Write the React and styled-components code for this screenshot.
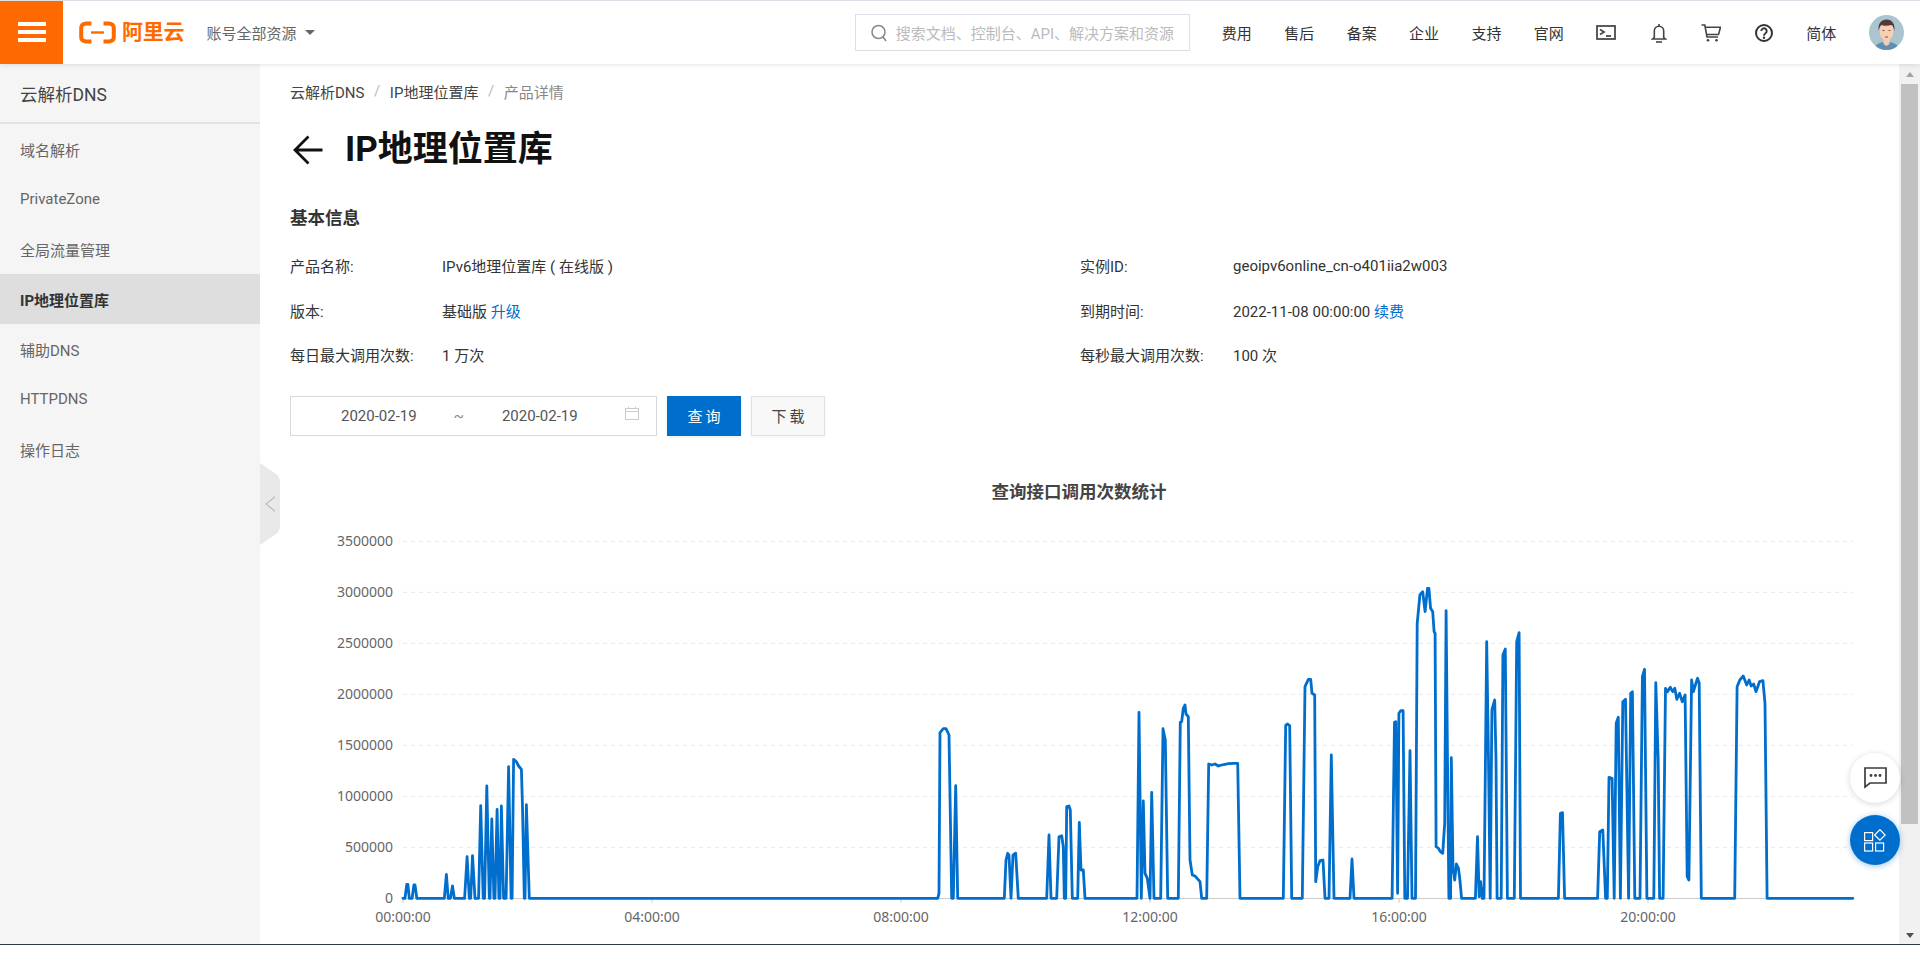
import React from "react";
import styled, { createGlobalStyle } from "styled-components";

const FONT = `Roboto, "Noto Sans CJK SC", sans-serif`;
const CHART_FONT = `"Noto Sans", "Noto Sans CJK SC", sans-serif`;

const Global = createGlobalStyle`
  html, body { margin: 0; padding: 0; height: 100%; overflow: hidden; background: #fff; }
  body { font-family: ${FONT}; color: #333; }
  * { box-sizing: border-box; }
`;

const Page = styled.div`
  position: relative; width: 1920px; height: 953px; display: flex; flex-direction: column; background: #fff; overflow: hidden;
`;
const TopBar = styled.header`
  height: 64px; flex: none; display: flex; align-items: center; background: #fff; border-top: 1px solid #dcdfe6;
  padding-right: 16px; position: relative; z-index: 3; box-shadow: 0 1px 5px rgba(0,0,0,.1);
`;
const Burger = styled.button`
  width: 63px; height: 63px; flex: none; border: 0; padding: 21px 17px 22px 18px; background: #ff6a00;
  display: flex; flex-direction: column; justify-content: space-between;
  span { display: block; height: 3.6px; background: #fff; }
`;
const Logo = styled.div`
  display: flex; align-items: center; margin-left: 16px; gap: 6px; color: #ff6a00;
  font-size: 21px; font-weight: 700; line-height: 1; letter-spacing: -.2px; white-space: nowrap;
`;
const Account = styled.div`
  margin-left: 22px; display: flex; align-items: center; gap: 9px; font-size: 15px; color: #666; white-space: nowrap;
  i { width: 0; height: 0; border-left: 5px solid transparent; border-right: 5px solid transparent; border-top: 5.5px solid #666; }
`;
const SearchBox = styled.div`
  margin-left: auto; width: 335px; height: 37px; border: 1px solid #dcdfe4; display: flex; align-items: center;
  padding-left: 15px; gap: 9px; font-size: 15px; color: #bbb; white-space: nowrap; overflow: hidden;
`;
const NavText = styled.a`
  width: 62.4px; flex: none; text-align: center; font-size: 15px; color: #333; white-space: nowrap;
  &:first-of-type { margin-left: 16px; }
`;
const LangText = styled.a`
  width: 62.4px; flex: none; text-align: center; font-size: 15px; color: #333; white-space: nowrap;
`;
const NavIcon = styled.span`
  width: 52.5px; flex: none; display: flex; justify-content: center; align-items: center; color: #444;
`;
const Avatar = styled.span`
  width: 35px; height: 35px; margin-left: 16.6px; flex: none; border-radius: 50%; overflow: hidden; display: block;
`;
const Body = styled.div`
  height: 881px; flex: none; display: flex; border-bottom: 1px solid #2d3a45;
`;
const Sidebar = styled.aside`
  width: 260px; flex: none; background: #f5f5f5; position: relative; z-index: 1;
`;
const SideHead = styled.div`
  height: 60px; display: flex; align-items: center; padding-left: 20px; font-size: 17.5px; color: #444; border-bottom: 2px solid #e2e2e2;
`;
const SideItem = styled.div`
  height: 50px; display: flex; align-items: center; padding-left: 20px; font-size: 15px;
  color: ${p => (p.$active ? "#333" : "#666")};
  font-weight: ${p => (p.$active ? 700 : 400)};
  background: ${p => (p.$active ? "#dedede" : "transparent")};
`;
const Collapse = styled.div`
  position: absolute; left: 100%; top: 399px; width: 20px; height: 82px; background: #e9e9e9;
  clip-path: polygon(0 0, 90% 15%, 100% 21%, 100% 79%, 90% 85%, 0 100%);
  display: flex; align-items: center; justify-content: flex-start; padding-left: 5px;
`;
const Main = styled.main`
  flex: 1; min-width: 0; padding: 16px 31px 0 30px; overflow: hidden; background: #fff;
`;
const Crumbs = styled.nav`
  height: 22px; display: flex; align-items: center; font-size: 15px; color: #444; white-space: nowrap;
  em { font-style: normal; color: #bbb; margin: 0 9.6px; }
  b { font-weight: 400; color: #888; }
`;
const TitleRow = styled.div`
  margin-top: 23px; height: 50px; display: flex; align-items: center; gap: 22px; padding-left: 3px;
`;
const Title = styled.h1`
  margin: 0; font-size: 35px; font-weight: 700; line-height: 50px; color: #111; white-space: nowrap;
`;
const Section = styled.h2`
  margin: 31px 0 0; font-size: 17.5px; line-height: 24px; font-weight: 700; color: #333;
`;
const InfoGrid = styled.div`
  margin-top: 13.5px; display: grid; grid-template-columns: 790px 1fr; grid-auto-rows: 44.4px;
`;
const InfoRow = styled.div`
  display: grid; grid-template-columns: ${p => (p.$right ? "153px" : "152px")} 1fr; align-items: center; font-size: 15px; color: #333; white-space: nowrap;
  a { color: #006ecc; }
`;
const Toolbar = styled.div`
  margin-top: 19.3px; height: 40px; display: flex; gap: 10px;
`;
const DateRange = styled.div`
  width: 367px; height: 40px; border: 1px solid #d8d8d8; display: flex; align-items: center; font-size: 15px; color: #555; position: relative; padding-left: 50px;
  span.tilde { color: #888; margin: 0 38px 0 37px; }
  svg { margin-left: 47px; margin-top: -5px; }
`;
const QueryBtn = styled.button`
  width: 74px; height: 40px; border: 0; background: #006ecc; color: #fff; font: 15px ${FONT}; letter-spacing: 3px; padding: 0 0 0 3px;
  box-shadow: 0 2px 3px rgba(0,0,0,.06);
`;
const DownBtn = styled.button`
  width: 74px; height: 40px; border: 1px solid #e0e0e0; background: #f8f8f8; color: #444; font: 15px ${FONT}; letter-spacing: 3px; padding: 0 0 0 3px;
  box-shadow: 0 2px 3px rgba(0,0,0,.04);
`;
const ChartBlock = styled.section`
  margin-top: 36px;
`;
const ChartTitle = styled.div`
  height: 38px; line-height: 40px; text-align: center; font-size: 17.5px; font-weight: 700; color: #444;
`;
const ChartSvg = styled.svg`
  display: block; width: 1578px; height: 434px; font-family: ${CHART_FONT}; font-size: 14px;
  text { fill: #666; }
`;
const Scrollbar = styled.div`
  width: 21px; flex: none; background: #f1f1f1; display: flex; flex-direction: column; align-items: center; position: relative; z-index: 1;
`;
const ScrollArrow = styled.div`
  width: 0; height: 0; flex: none; border-left: 4.5px solid transparent; border-right: 4.5px solid transparent;
  ${p => (p.$down ? "border-top: 5px solid #505050; margin: 0 0 6px;" : "border-bottom: 5px solid #a3a3a3; margin: 8px 0 7px;")}
`;
const ScrollThumb = styled.div`
  width: 17px; height: 740px; flex: none; background: #c1c1c1;
`;
const ScrollFill = styled.div`flex: 1;`;
const FabStack = styled.div`
  position: absolute; right: 20px; bottom: 88px; display: flex; flex-direction: column; gap: 12px; z-index: 4;
`;
const Fab = styled.div`
  width: 50px; height: 50px; border-radius: 50%; display: flex; align-items: center; justify-content: center;
  background: ${p => (p.$primary ? "#006ecc" : "#fff")};
  box-shadow: ${p => (p.$primary ? "0 1px 6px rgba(0,110,204,.4)" : "0 1px 6px rgba(0,0,0,.16)")};
`;

/* traced line: [zoom x, zoom y] pairs per reference crop */
const Z5 = [372,775,378,775,383,733,386,733,390,775,398,775,403,735,406,735,411,775,488,775,494,703,499,775,505,775,511,738,516,775,545,775,552,650,558,775,562,775,567,647,574,775,584,775,590,497,597,775,601,775,607,438,614,775,616,775,621,537,627,775,630,775,636,508,641,775,644,775,648,498,654,775,661,775,668,380,675,775,678,775,682,358,690,365,696,378,704,388,707,500,712,775,714,775,718,494,726,775];
const Z6 = [0,775,113,775,117,760,120,278,130,266,138,266,147,285,155,775,160,775,167,437,173,775,313,775,318,660,323,640,327,645,333,775,339,645,347,640,355,775,440,775,447,585,453,775,470,775,477,590,485,587,490,620,493,775,497,775,500,500,507,498,511,510,517,775,533,775,538,547,543,690,550,690,555,775,711,775,717,217,724,775,730,483,735,700,742,715,750,775,755,457,762,775,782,775,789,266,796,300,803,775,835,775,841,247,845,245,850,205,855,195,858,222,865,230,870,660,877,705,885,708,900,725,905,775,920,775,926,372,935,375,945,372,955,378,965,375,975,373,985,371,1000,370,1013,370,1020,775,1150,775,1157,256,1162,252,1169,257,1175,775,1207,775,1215,140,1222,125,1225,118,1232,118,1236,160,1244,165,1247,725,1253,680,1260,662,1269,660,1275,775,1287,775,1294,345,1302,775,1350,775,1356,657,1362,775,1470,775];
const Z7 = [35,1015,42,487,46,485,51,1000,55,460,60,452,67,452,72,1015,80,1015,87,572,93,1015,103,1015,108,190,116,105,124,95,131,155,138,85,142,85,147,145,153,155,157,215,160,220,163,860,170,865,175,875,182,880,188,790,192,152,197,700,200,1015,205,1015,207,593,212,925,217,960,222,912,228,925,232,960,237,1015,277,1015,283,830,288,1010,292,965,297,1015,302,1015,310,245,315,600,320,1015,325,450,333,420,337,600,340,1015,352,1015,357,285,364,267,370,1015,390,1015,397,245,404,218,408,1015,518,1015,524,760,530,758,536,1015,632,1015,638,815,647,810,655,1015,660,1015,665,652,674,655,680,1015,686,490,692,472,698,1015,705,425,713,418,722,1015,728,400,733,395,740,1015,755,1015,762,350,768,328,775,1015,795,1015,801,368,808,600,812,1015,822,1015,829,385,835,395,843,382,850,395,856,385,862,418,870,400,878,425,886,405,892,950,897,960,905,360,910,395,916,375,922,355,927,370,933,1015,1030,1015,1037,380,1045,360,1055,348,1065,375,1072,360,1078,378,1085,372,1092,395,1102,365,1112,362,1118,430,1124,1015,1373,1015];

const convert = (arr, ox, fx, oy) => {
  const out = [];
  for (let i = 0; i < arr.length; i += 2) out.push(`${(ox + arr[i] / fx).toFixed(1)},${(oy + arr[i + 1] / 3).toFixed(1)}`);
  return out;
};
const LINE = [...convert(Z5, 270, 2.8, 640), ...convert(Z6, 900, 3, 640), ...convert(Z7, 1380, 2.904, 560)].join(" ");

const Y_TICKS = ["3500000", "3000000", "2500000", "2000000", "1500000", "1000000", "500000", "0"];
const X_TICKS = ["00:00:00", "04:00:00", "08:00:00", "12:00:00", "16:00:00", "20:00:00"];
const Y0 = 541.3, YS = 51, X0 = 403, XS = 249, XEND = 1853;

const Chart = () => (
  <ChartSvg viewBox="290 510 1578 434">
    {Y_TICKS.map((t, i) => {
      const y = Y0 + i * YS;
      return (
        <g key={t}>
          {i < 7 && <line x1={X0} x2={XEND} y1={y} y2={y} stroke="#e8e8e8" strokeDasharray="4 4" />}
          <text x="393" y={y + 5} textAnchor="end">{t}</text>
        </g>
      );
    })}
    <line x1={X0} x2={XEND} y1="898.5" y2="898.5" stroke="#ccc" />
    {X_TICKS.map((t, i) => {
      const x = X0 + i * XS;
      return (
        <g key={t}>
          <line x1={x} x2={x} y1="898" y2="903" stroke="#ccc" />
          <text x={x} y="922" textAnchor="middle">{t}</text>
        </g>
      );
    })}
    <polyline points={LINE} fill="none" stroke="#006ecc" strokeWidth="2.8" strokeLinejoin="round" strokeLinecap="round" />
  </ChartSvg>
);

const LogoMark = () => (
  <svg width="37" height="23" viewBox="0 0 37 23" fill="none" stroke="#ff6a00" strokeWidth="4">
    <path d="M12.5 2.5 H7 Q2.2 3 2.2 7 V16 Q2.2 20 7 20.5 H12.5" />
    <path d="M24.5 2.5 H30 Q34.8 3 34.8 7 V16 Q34.8 20 30 20.5 H24.5" />
    <path d="M12 11.5 H25" strokeWidth="2.4" />
  </svg>
);
const SearchIcon = () => (
  <svg width="16" height="18" viewBox="0 0 16 18" fill="none" stroke="#888" strokeWidth="1.5">
    <circle cx="7.5" cy="8" r="6.5" /><path d="M12 13 L15 17" />
  </svg>
);
const TerminalIcon = () => (
  <svg width="20" height="15" viewBox="0 0 20 15" fill="none" stroke="#4a4a4a" strokeWidth="1.8">
    <rect x="1" y="1" width="18" height="13" /><path d="M4 4.5 L8 7 L4 9.5" /><path d="M10 11 H15" />
  </svg>
);
const BellIcon = () => (
  <svg width="16" height="20" viewBox="0 0 16 20" fill="none" stroke="#444" strokeWidth="1.6">
    <path d="M8 1 V3" /><path d="M3.3 14.5 V8 a4.7 4.7 0 0 1 9.4 0 V14.5 L14.5 16 H1.5 Z" /><path d="M5 19 H11" />
  </svg>
);
const CartIcon = () => (
  <svg width="20" height="18" viewBox="0 0 20 18" fill="none" stroke="#444" strokeWidth="1.6">
    <path d="M0.5 1 H3.8 L6 13 H17 M4.5 3.2 H19.5 L17.5 10.5 H5.4" />
    <circle cx="7" cy="16.3" r="1.3" fill="#444" stroke="none" /><circle cx="15.5" cy="16.3" r="1.3" fill="#444" stroke="none" />
  </svg>
);
const HelpIcon = () => (
  <svg width="18" height="18" viewBox="0 0 18 18" fill="none" stroke="#333" strokeWidth="2">
    <circle cx="9" cy="9" r="8" /><path d="M6.3 7 a2.7 2.7 0 1 1 4.2 2.3 c-1 .6-1.5 1.1-1.5 2.4" strokeWidth="1.9" />
    <circle cx="9" cy="13.8" r="1.2" fill="#333" stroke="none" />
  </svg>
);
const AvatarArt = () => (
  <svg width="35" height="35" viewBox="0 0 35 35">
    <rect width="35" height="35" fill="#aac4d0" />
    <path d="M5 35 C6 28 12 27 17.5 27 C23 27 29 28 30 35 Z" fill="#5f8fb2" />
    <path d="M14.5 24 H20.5 V29 L17.5 31 L14.5 29 Z" fill="#f3cdb2" />
    <ellipse cx="17.5" cy="16" rx="7" ry="9.5" fill="#f8cfb3" />
    <path d="M9.7 16 C8.5 8 13 4.5 17.5 4.5 C23 4.5 26.5 9 25.3 16 C24.8 12.5 24 11 22.5 10 C19 11 14 11 12.5 10 C11 11 10.2 13 9.7 16 Z" fill="#54393a" />
    <path d="M13.5 15.5 H15.5 M19.5 15.5 H21.5 M16 22 H19" stroke="#6a4a42" strokeWidth=".9" />
  </svg>
);
const ChatIcon = () => (
  <svg width="23" height="22" viewBox="0 0 23 22" fill="none" stroke="#3d3d3d" strokeWidth="1.7">
    <path d="M1 1 H22 V16 H6 L1 20 Z" />
    <circle cx="7" cy="8.5" r="1.4" fill="#3d3d3d" stroke="none" /><circle cx="11.5" cy="8.5" r="1.4" fill="#3d3d3d" stroke="none" /><circle cx="16" cy="8.5" r="1.4" fill="#3d3d3d" stroke="none" />
  </svg>
);
const AppsIcon = () => (
  <svg width="23" height="23" viewBox="0 0 23 23" fill="none" stroke="#fff" strokeWidth="1.2">
    <rect x="0.6" y="3.6" width="8" height="8" /><rect x="0.6" y="14" width="8" height="8" /><rect x="11.6" y="14" width="8" height="8" />
    <rect x="12.2" y="2.2" width="7.4" height="7.4" transform="rotate(45 15.9 5.9)" />
  </svg>
);
const CalendarIcon = () => (
  <svg width="14" height="14" viewBox="0 0 14 14" fill="none" stroke="#ccc" strokeWidth="1">
    <rect x=".5" y="2.5" width="13" height="11" /><path d="M.5 5.5 H13.5 M3.5 .5 V3 M10.5 .5 V3" />
  </svg>
);
const BackArrow = () => (
  <svg width="30" height="30" viewBox="0 0 30 30" fill="none" stroke="#111" strokeWidth="2.8">
    <path d="M29.5 15 H2 M15.5 1.5 L2 15 L15.5 28.5" />
  </svg>
);
const Chevron = () => (
  <svg width="11" height="16" viewBox="0 0 11 16" fill="none" stroke="#bdbdbd" strokeWidth="1.3"><path d="M10 .7 L1 8 L10 15.3" /></svg>
);

const MENU = ["域名解析", "PrivateZone", "全局流量管理", "IP地理位置库", "辅助DNS", "HTTPDNS", "操作日志"];
const NAV = ["费用", "售后", "备案", "企业", "支持", "官网"];

export default function App() {
  return (
    <Page>
      <Global />
      <TopBar>
        <Burger aria-label="menu"><span /><span /><span /></Burger>
        <Logo><LogoMark />阿里云</Logo>
        <Account>账号全部资源<i /></Account>
        <SearchBox><SearchIcon />搜索文档、控制台、API、解决方案和资源</SearchBox>
        {NAV.map(n => <NavText key={n}>{n}</NavText>)}
        <NavIcon><TerminalIcon /></NavIcon>
        <NavIcon><BellIcon /></NavIcon>
        <NavIcon><CartIcon /></NavIcon>
        <NavIcon><HelpIcon /></NavIcon>
        <LangText>简体</LangText>
        <Avatar><AvatarArt /></Avatar>
      </TopBar>
      <Body>
        <Sidebar>
          <SideHead>云解析DNS</SideHead>
          {MENU.map(m => <SideItem key={m} $active={m === "IP地理位置库"}>{m}</SideItem>)}
          <Collapse><Chevron /></Collapse>
        </Sidebar>
        <Main>
          <Crumbs>云解析DNS<em>/</em>IP地理位置库<em>/</em><b>产品详情</b></Crumbs>
          <TitleRow><BackArrow /><Title>IP地理位置库</Title></TitleRow>
          <Section>基本信息</Section>
          <InfoGrid>
            <InfoRow><span>产品名称:</span><span>IPv6地理位置库 ( 在线版 )</span></InfoRow>
            <InfoRow $right><span>实例ID:</span><span>geoipv6online_cn-o401iia2w003</span></InfoRow>
            <InfoRow><span>版本:</span><span>基础版 <a>升级</a></span></InfoRow>
            <InfoRow $right><span>到期时间:</span><span>2022-11-08 00:00:00 <a>续费</a></span></InfoRow>
            <InfoRow><span>每日最大调用次数:</span><span>1 万次</span></InfoRow>
            <InfoRow $right><span>每秒最大调用次数:</span><span>100 次</span></InfoRow>
          </InfoGrid>
          <Toolbar>
            <DateRange>
              <span>2020-02-19</span><span className="tilde">~</span><span>2020-02-19</span><CalendarIcon />
            </DateRange>
            <QueryBtn>查询</QueryBtn>
            <DownBtn>下载</DownBtn>
          </Toolbar>
          <ChartBlock>
            <ChartTitle>查询接口调用次数统计</ChartTitle>
            <Chart />
          </ChartBlock>
        </Main>
        <Scrollbar>
          <ScrollArrow />
          <ScrollThumb />
          <ScrollFill />
          <ScrollArrow $down />
        </Scrollbar>
      </Body>
      <FabStack>
        <Fab><ChatIcon /></Fab>
        <Fab $primary><AppsIcon /></Fab>
      </FabStack>
    </Page>
  );
}
